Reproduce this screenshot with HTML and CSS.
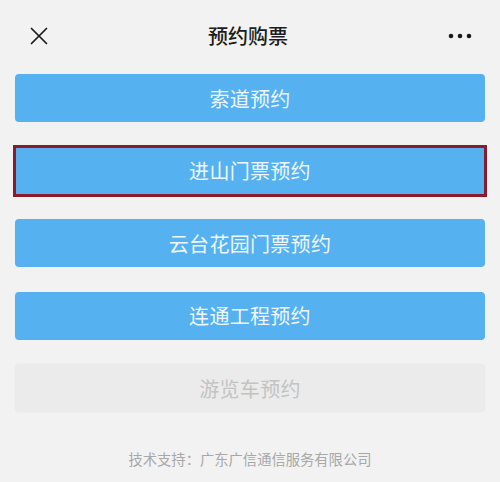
FILE: index.html
```html
<!DOCTYPE html>
<html lang="zh-CN">
<head>
<meta charset="utf-8">
<title>预约购票</title>
<link rel="stylesheet" href="styles.css">
</head>
<body>
<div class="page">
  <header class="topbar">
    <span class="icon-close">
      <svg width="18" height="18" viewBox="0 0 18 18"><path d="M1.5 1.5 L16.5 16.5 M16.5 1.5 L1.5 16.5" stroke="#1a1a1a" stroke-width="1.7" fill="none" stroke-linecap="round"/></svg>
    </span>
    <h1 class="title">预约购票</h1>
    <span class="icon-more">
      <svg width="24" height="6" viewBox="0 0 24 6"><circle cx="3" cy="3" r="2.3" fill="#1a1a1a"/><circle cx="12" cy="3" r="2.3" fill="#1a1a1a"/><circle cx="21" cy="3" r="2.3" fill="#1a1a1a"/></svg>
    </span>
  </header>
  <main class="list">
    <div class="btn">索道预约</div>
    <div class="btn btn-marked">进山门票预约</div>
    <div class="btn">云台花园门票预约</div>
    <div class="btn">连通工程预约</div>
    <div class="btn btn-disabled">游览车预约</div>
  </main>
  <footer class="footer">技术支持：广东广信通信服务有限公司</footer>
</div>
</body>
</html>
```

FILE: styles.css
```css
html, body {
  margin: 0;
  padding: 0;
  background: #f2f2f2;
}
.page {
  width: 500px;
  height: 482px;
  font-family: "Noto Sans CJK SC", "Noto Sans", sans-serif;
  display: flex;
  flex-direction: column;
}
.topbar {
  height: 72px;
  display: flex;
  align-items: center;
  justify-content: space-between;
  padding: 0 28px 0 30px;
}
.icon-close {
  width: 18px;
  height: 18px;
  display: flex;
}
.icon-more {
  width: 24px;
  height: 6px;
  display: flex;
}
.title {
  margin: 0;
  font-size: 20px;
  font-weight: 500;
  color: #1c1c1c;
  line-height: 28px;
}
.list {
  display: flex;
  flex-direction: column;
  gap: 24.5px;
  padding: 2px 15px 0 15px;
}
.btn {
  height: 48px;
  border-radius: 4px;
  background: #55b1f0;
  color: #eef7ff;
  font-size: 20px;
  display: flex;
  align-items: center;
  justify-content: center;
  letter-spacing: 0.3px;
}
.btn-marked {
  border-radius: 0;
  outline: 3px solid #8a1b2c;
  outline-offset: -1px;
}
.btn-disabled {
  background: #ebebeb;
  color: #c3c3c3;
  box-shadow: 0 0 0 1px #efefef;
}
.footer {
  margin-top: 37px;
  text-align: center;
  font-size: 14.3px;
  line-height: 20px;
  color: #a8a8a8;
}
```
